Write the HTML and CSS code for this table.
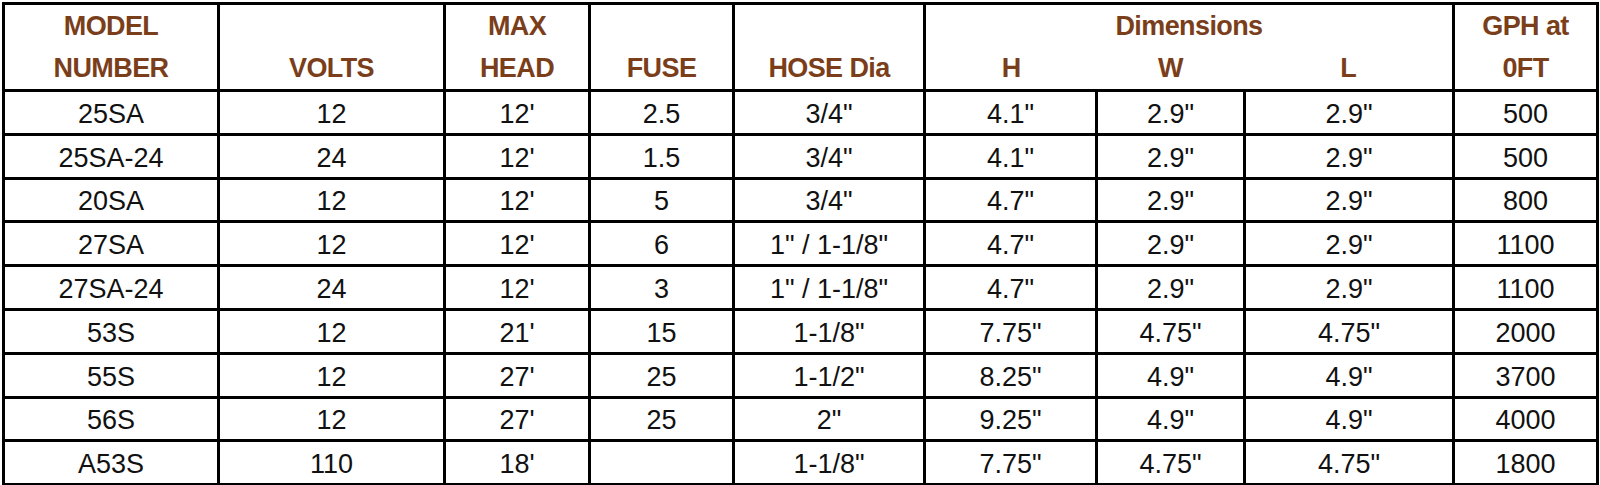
FILE: index.html
```html
<!DOCTYPE html>
<html>
<head>
<meta charset="utf-8">
<link rel="stylesheet" href="styles.css">
</head>
<body>
<table class="spec">
  <colgroup>
    <col class="c-model"><col class="c-volts"><col class="c-head"><col class="c-fuse"><col class="c-hose"><col class="c-h"><col class="c-w"><col class="c-l"><col class="c-gph">
  </colgroup>
  <thead>
    <tr class="hr1">
      <th rowspan="2">MODEL<br>NUMBER</th>
      <th rowspan="2">VOLTS</th>
      <th rowspan="2">MAX<br>HEAD</th>
      <th rowspan="2">FUSE</th>
      <th rowspan="2">HOSE Dia</th>
      <th colspan="3" class="dim">Dimensions</th>
      <th rowspan="2">GPH at<br>0FT</th>
    </tr>
    <tr class="hr2">
      <th class="sub">H</th>
      <th class="sub">W</th>
      <th class="sub">L</th>
    </tr>
  </thead>
  <tbody>
    <tr><td>25SA</td><td>12</td><td>12'</td><td>2.5</td><td>3/4"</td><td>4.1"</td><td>2.9"</td><td>2.9"</td><td>500</td></tr>
    <tr><td>25SA-24</td><td>24</td><td>12'</td><td>1.5</td><td>3/4"</td><td>4.1"</td><td>2.9"</td><td>2.9"</td><td>500</td></tr>
    <tr><td>20SA</td><td>12</td><td>12'</td><td>5</td><td>3/4"</td><td>4.7"</td><td>2.9"</td><td>2.9"</td><td>800</td></tr>
    <tr><td>27SA</td><td>12</td><td>12'</td><td>6</td><td>1" / 1-1/8"</td><td>4.7"</td><td>2.9"</td><td>2.9"</td><td>1100</td></tr>
    <tr><td>27SA-24</td><td>24</td><td>12'</td><td>3</td><td>1" / 1-1/8"</td><td>4.7"</td><td>2.9"</td><td>2.9"</td><td>1100</td></tr>
    <tr><td>53S</td><td>12</td><td>21'</td><td>15</td><td>1-1/8"</td><td>7.75"</td><td>4.75"</td><td>4.75"</td><td>2000</td></tr>
    <tr><td>55S</td><td>12</td><td>27'</td><td>25</td><td>1-1/2"</td><td>8.25"</td><td>4.9"</td><td>4.9"</td><td>3700</td></tr>
    <tr><td>56S</td><td>12</td><td>27'</td><td>25</td><td>2"</td><td>9.25"</td><td>4.9"</td><td>4.9"</td><td>4000</td></tr>
    <tr><td>A53S</td><td>110</td><td>18'</td><td></td><td>1-1/8"</td><td>7.75"</td><td>4.75"</td><td>4.75"</td><td>1800</td></tr>
  </tbody>
</table>
</body>
</html>
```

FILE: styles.css
```css
html, body {
  margin: 0;
  padding: 0;
  background: #ffffff;
}

.spec {
  margin: 2px 0 0 2px;
  border-collapse: collapse;
  table-layout: fixed;
  width: 1597px;
  font-family: "Liberation Sans", Arial, sans-serif;
}

.c-model { width: 215px; }
.c-volts { width: 226px; }
.c-head { width: 145px; }
.c-fuse { width: 144px; }
.c-hose { width: 191px; }
.c-h { width: 172px; }
.c-w { width: 148px; }
.c-l { width: 209px; }
.c-gph { width: 144px; }

.spec th,
.spec td {
  border: 3px solid #000;
  text-align: center;
  padding: 0;
}

.spec th {
  color: #7a3e1b;
  font-weight: bold;
  font-size: 27px;
  letter-spacing: -0.6px;
  line-height: 42px;
  vertical-align: bottom;
}

.spec .hr1 th { height: 40px; }
.spec .hr2 th { height: 40px; }

.spec th.dim {
  border-bottom: none;
}

.spec th.sub {
  border-top: none;
  border-left: none;
  border-right: none;
}

.spec td {
  height: 37.8px;
  font-size: 27px;
  color: #111;
  line-height: 30px;
  padding-top: 3px;
  vertical-align: middle;
}
```
